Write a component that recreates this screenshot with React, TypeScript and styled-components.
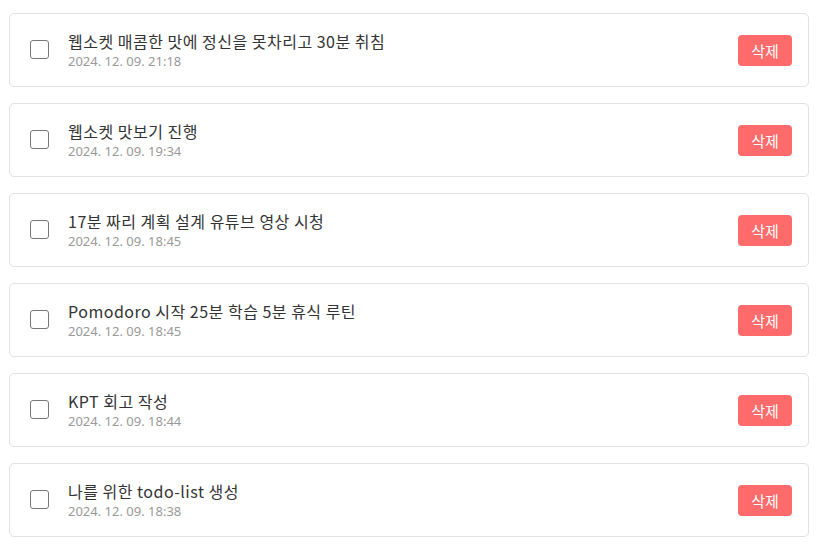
import React, { useState } from "react";
import styled, { createGlobalStyle } from "styled-components";

const Global = createGlobalStyle`
  html, body { margin: 0; padding: 0; background: #ffffff; }
  body { font-family: "Noto Sans CJK KR", sans-serif; }
  * { box-sizing: border-box; }
`;

const List = styled.ul`
  list-style: none;
  margin: 0;
  padding: 13px 0 0 9px;
  display: flex;
  flex-direction: column;
  gap: 16px;
`;

const Card = styled.li`
  width: 800px;
  height: 74px;
  border: 1px solid #e1e1e6;
  border-radius: 5px;
  background: #fff;
  display: flex;
  align-items: center;
  padding: 0 16px 0 20px;
`;

const Check = styled.span<{ $on: boolean }>`
  width: 19px;
  height: 19px;
  border: 1.5px solid #767676;
  border-radius: 3px;
  flex: none;
  margin-right: 19px;
  margin-top: -1px;
  background: ${(p) => (p.$on ? "#0075ff" : "#fff")};
  cursor: pointer;
`;

const Texts = styled.div`
  flex: 1;
  display: flex;
  flex-direction: column;
`;

const Title = styled.span`
  font-family: "Noto Sans CJK KR", sans-serif;
  font-size: 16px;
  line-height: 22px;
  letter-spacing: 0.5px;
  color: #333333;
`;

const DateText = styled.span`
  font-family: "Noto Sans", "Noto Sans CJK KR", sans-serif;
  font-size: 13px;
  line-height: 17px;
  margin-top: 1px;
  color: #999999;
`;

const DeleteButton = styled.button`
  width: 54px;
  height: 31px;
  border: none;
  border-radius: 4px;
  background: #ff6b6b;
  color: #ffffff;
  font-family: "Noto Sans CJK KR", sans-serif;
  font-size: 15px;
  padding: 0;
  flex: none;
  cursor: pointer;
`;

const todos = [
  { title: "웹소켓 매콤한 맛에 정신을 못차리고 30분 취침", date: "2024. 12. 09. 21:18" },
  { title: "웹소켓 맛보기 진행", date: "2024. 12. 09. 19:34" },
  { title: "17분 짜리 계획 설계 유튜브 영상 시청", date: "2024. 12. 09. 18:45" },
  { title: "Pomodoro 시작 25분 학습 5분 휴식 루틴", date: "2024. 12. 09. 18:45" },
  { title: "KPT 회고 작성", date: "2024. 12. 09. 18:44" },
  { title: "나를 위한 todo-list 생성", date: "2024. 12. 09. 18:38" },
];

export default function App() {
  const [checked, setChecked] = useState<boolean[]>(todos.map(() => false));
  return (
    <>
      <Global />
      <List>
        {todos.map((t, i) => (
          <Card key={i}>
            <Check
              $on={checked[i]}
              onClick={() => setChecked((c) => c.map((v, j) => (j === i ? !v : v)))}
            />
            <Texts>
              <Title>{t.title}</Title>
              <DateText>{t.date}</DateText>
            </Texts>
            <DeleteButton>삭제</DeleteButton>
          </Card>
        ))}
      </List>
    </>
  );
}
